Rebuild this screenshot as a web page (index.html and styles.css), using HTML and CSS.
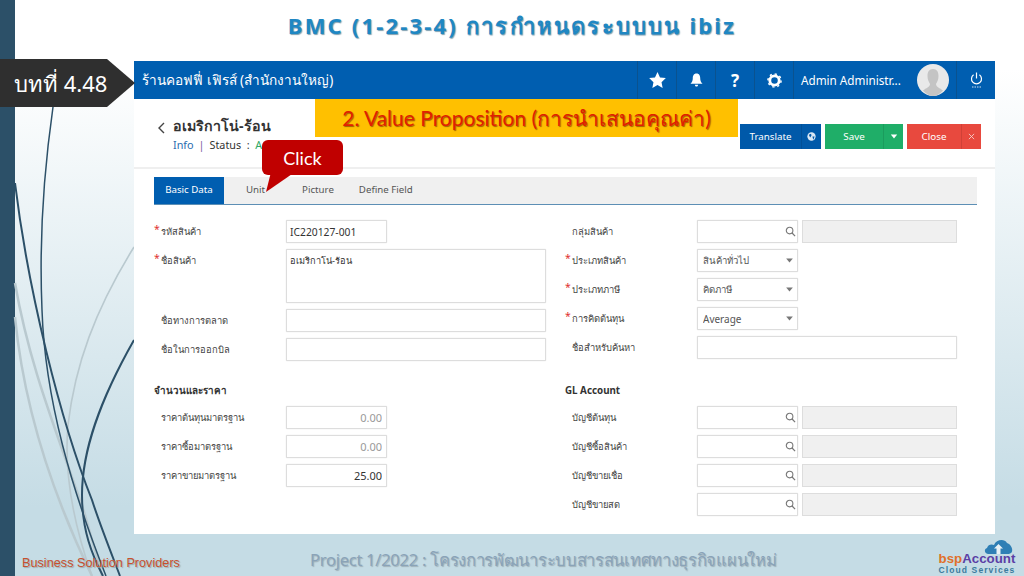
FILE: index.html
```html
<!DOCTYPE html>
<html lang="th">
<head>
    <meta charset="UTF-8"/>
    <title>BMC (1-2-3-4)</title>
    <link rel="stylesheet" href="styles.css">
</head>
<body>
<svg class="defs" width="0" height="0">
    <symbol id="i_search" viewBox="0 0 12 12"><circle cx="5" cy="5" r="3.6" fill="none" stroke="#777" stroke-width="1.2"/><path d="M7.7 7.7 L11 11" stroke="#777" stroke-width="1.4"/></symbol>
    <symbol id="i_caret" viewBox="0 0 10 6"><path d="M1 0.5 H9 L5 5.5 Z" fill="#777"/></symbol>
</svg>
<div class="slide">
    <!-- slide decoration -->
    <svg class="curves" width="1024" height="576" viewBox="0 0 1024 576">
        <g fill="none" stroke="#b9c9cf">
            <path d="M134 247 C95 310 75 365 68 425 C64 470 72 520 92 576" stroke-width="1.6"/>
            <path d="M15 283 C30 370 60 440 85 515 C92 540 98 560 102 576" stroke-width="2.5"/>
            <path d="M15 317 C25 420 60 510 92 576" stroke-width="2.5"/>
        </g>
        <g fill="none" stroke="#2c5068">
            <path d="M53 107 C44 170 39 240 42 310 C45 400 72 490 106 576" stroke-width="1.5"/>
            <path d="M15 183 C28 290 60 420 92 500 C100 525 112 555 120 576" stroke-width="2"/>
            <path d="M134 340 C100 400 82 450 82 495 C82 530 92 555 103 576" stroke-width="2"/>
        </g>
    </svg>

    <h1 class="slide_title">BMC (1-2-3-4) การกำหนดระบบบน ibiz</h1>

    <div class="app">
        <div class="topbar">
            <div class="company">ร้านคอฟฟี่ เฟิรส์ (สำนักงานใหญ่)</div>
            <div class="top_cell">
                <svg width="17" height="16" viewBox="0 0 24 23"><path d="M12 0 L15.6 7.8 L24 8.8 L17.8 14.6 L19.4 23 L12 18.8 L4.6 23 L6.2 14.6 L0 8.8 L8.4 7.8 Z" fill="#fff"/></svg>
            </div>
            <div class="top_cell">
                <svg width="13" height="14" viewBox="0 0 14 15"><path d="M7 0.5 C4 0.5 3 3 3 5.5 C3 8.5 2 10 0.5 11.5 H13.5 C12 10 11 8.5 11 5.5 C11 3 10 0.5 7 0.5 Z M5.2 12.6 H8.8 C8.6 14 7.8 14.6 7 14.6 C6.2 14.6 5.4 14 5.2 12.6 Z" fill="#fff"/></svg>
            </div>
            <div class="top_cell top_help">?</div>
            <div class="top_cell">
                <svg width="15" height="15" viewBox="0 0 16 16"><circle cx="8" cy="8" r="5" fill="none" stroke="#fff" stroke-width="3"/><circle cx="8" cy="8" r="7" fill="none" stroke="#fff" stroke-width="1.6" stroke-dasharray="2.4 3.1"/></svg>
            </div>
            <div class="top_user">
                <span class="user_name">Admin Administr...</span>
                <svg class="avatar" width="32" height="32" viewBox="0 0 32 32">
                    <circle cx="16" cy="16" r="16" fill="#e9e9e9"/>
                    <path d="M16 5 C12 5 10.5 8 10.5 12 C10.5 16 12 18 13 20 C13 23 9 24 6 26.5 C9 30 12.5 32 16 32 C19.5 32 23 30 26 26.5 C23 24 19 23 19 20 C20 18 21.5 16 21.5 12 C21.5 8 20 5 16 5 Z" fill="#c4c4c4"/>
                </svg>
            </div>
            <div class="top_cell">
                <svg width="13" height="16" viewBox="0 0 13 16"><path d="M3.6 2.8 A5 5 0 1 0 9.4 2.8" fill="none" stroke="#fff" stroke-width="1.2"/><path d="M6.5 0.5 V6.5" stroke="#fff" stroke-width="1.2"/><path d="M2 15 H11" stroke="#cfe0f0" stroke-width="1" stroke-dasharray="1.5 1"/></svg>
            </div>
        </div>

        <div class="page_head">
            <svg class="back" width="8" height="12" viewBox="0 0 8 12"><path d="M7 1 L2 6 L7 11" fill="none" stroke="#444" stroke-width="1.4"/></svg>
            <div class="head_text">
                <div class="item_name">อเมริกาโน่-ร้อน</div>
                <div class="item_info"><a class="info_link">Info</a><span class="info_sep">|</span>Status &nbsp;:&nbsp; <span class="status_val">Active</span></div>
            </div>
            <div class="actions">
                <div class="btn btn_blue"><span class="btn_text">Translate</span><span class="btn_side">
                    <svg width="9" height="9" viewBox="0 0 10 10"><circle cx="5" cy="5" r="4.6" fill="#dce8f4"/><path d="M2 3 L4.5 2 L5 4 L3.5 6 Z M6 5 L8.5 5 L7 8.5 Z" fill="#0059a9"/></svg>
                </span></div>
                <div class="btn btn_green"><span class="btn_text">Save</span><span class="btn_side">
                    <svg width="8" height="5" viewBox="0 0 10 6"><path d="M1 0.5 H9 L5 5.5 Z" fill="#fff"/></svg>
                </span></div>
                <div class="btn btn_red"><span class="btn_text">Close</span><span class="btn_side">
                    <svg width="7" height="7" viewBox="0 0 8 8"><path d="M1 1 L7 7 M7 1 L1 7" stroke="#f5d0cc" stroke-width="1"/></svg>
                </span></div>
            </div>
        </div>

        <div class="tabs">
            <div class="tab tab_active">Basic Data</div>
            <div class="tab tab_unit">Unit</div>
            <div class="tab tab_pic">Picture</div>
            <div class="tab">Define Field</div>
        </div>

        <div class="form">
            <div class="col">
                <div class="col_top">
                    <div class="row"><span class="star">*</span><label>รหัสสินค้า</label><input class="w_s" value="IC220127-001"></div>
                    <div class="row row_tall"><span class="star">*</span><label>ชื่อสินค้า</label><textarea class="w_l">อเมริกาโน่-ร้อน</textarea></div>
                    <div class="row"><span class="star"></span><label>ชื่อทางการตลาด</label><input class="w_l"></div>
                    <div class="row"><span class="star"></span><label>ชื่อในการออกบิล</label><input class="w_l"></div>
                </div>
                <div class="sec_head">จำนวนและราคา</div>
                <div class="row"><span class="star"></span><label>ราคาต้นทุนมาตรฐาน</label><input class="w_s num num_off" value="0.00"></div>
                <div class="row"><span class="star"></span><label>ราคาซื้อมาตรฐาน</label><input class="w_s num num_off" value="0.00"></div>
                <div class="row"><span class="star"></span><label>ราคาขายมาตรฐาน</label><input class="w_s num" value="25.00"></div>
            </div>

            <div class="col">
                <div class="col_top">
                    <div class="row"><span class="star"></span><label>กลุ่มสินค้า</label><div class="pick"><input class="w_s"><svg class="pick_icon" width="11" height="11"><use href="#i_search"/></svg></div><div class="ro"></div></div>
                    <div class="row"><span class="star">*</span><label>ประเภทสินค้า</label><div class="pick"><input class="w_s sel sel_th" value="สินค้าทั่วไป"><svg class="sel_icon" width="9" height="5"><use href="#i_caret"/></svg></div></div>
                    <div class="row"><span class="star">*</span><label>ประเภทภาษี</label><div class="pick"><input class="w_s sel sel_th" value="คิดภาษี"><svg class="sel_icon" width="9" height="5"><use href="#i_caret"/></svg></div></div>
                    <div class="row"><span class="star">*</span><label>การคิดต้นทุน</label><div class="pick"><input class="w_s sel" value="Average"><svg class="sel_icon" width="9" height="5"><use href="#i_caret"/></svg></div></div>
                    <div class="row"><span class="star"></span><label>ชื่อสำหรับค้นหา</label><input class="w_l"></div>
                </div>
                <div class="sec_head">GL Account</div>
                <div class="row"><span class="star"></span><label>บัญชีต้นทุน</label><div class="pick"><input class="w_s"><svg class="pick_icon" width="11" height="11"><use href="#i_search"/></svg></div><div class="ro"></div></div>
                <div class="row"><span class="star"></span><label>บัญชีซื้อสินค้า</label><div class="pick"><input class="w_s"><svg class="pick_icon" width="11" height="11"><use href="#i_search"/></svg></div><div class="ro"></div></div>
                <div class="row"><span class="star"></span><label>บัญชีขายเชื่อ</label><div class="pick"><input class="w_s"><svg class="pick_icon" width="11" height="11"><use href="#i_search"/></svg></div><div class="ro"></div></div>
                <div class="row"><span class="star"></span><label>บัญชีขายสด</label><div class="pick"><input class="w_s"><svg class="pick_icon" width="11" height="11"><use href="#i_search"/></svg></div><div class="ro"></div></div>
            </div>
        </div>
    </div>

    <div class="slide_foot">
        <div class="foot_left">Business Solution Providers</div>
        <div class="foot_mid">Project 1/2022 : โครงการพัฒนาระบบสารสนเทศทางธุรกิจแผนใหม่</div>
        <div class="logo">
            <svg class="logo_cloud" width="29" height="15" viewBox="0 0 29 15"><path d="M4 15 C0 14 0 10 3 9 C4 5 8 5 10 6 C12 1 20 -1 23 4 C27 5 30 11 27 14 L25 15 Z" fill="#2f7fb5"/><path d="M14.5 5 L19 9.5 H16.5 V15 H12.5 V9.5 H10 Z" fill="#e8f1f5"/></svg>
            <div class="logo_name"><span class="logo_bsp">bsp</span>Account</div>
            <div class="logo_sub">Cloud Services</div>
        </div>
    </div>

    <!-- callouts placed over the slide -->
    <div class="chapter">บทที่ 4.48</div>
    <div class="banner">2. Value Proposition (การนำเสนอคุณค่า)</div>
    <div class="click_note">Click</div>
    <svg class="click_tail" width="34" height="22" viewBox="0 0 34 22"><path d="M8 0 L32 0 L3 20 Z" fill="#c00000"/></svg>
</div>
</body>
</html>
```

FILE: styles.css
```css
* {
    box-sizing: border-box;
}

body {
    margin: 0;
    font-family: "Noto Sans", "Open Sans", sans-serif;
    color: #333;
}

.defs {
    position: absolute;
}

.slide {
    position: relative;
    width: 1024px;
    height: 576px;
    overflow: hidden;
    display: flex;
    flex-direction: column;
    padding-left: 15px;
    background:
        linear-gradient(#2c5068, #2c5068) left top / 15px 100% no-repeat,
        linear-gradient(180deg, #ffffff 0%, #ffffff 12%, #c5dce5 88%, #c5dce5 100%);
}

.curves {
    position: absolute;
    left: 0;
    top: 0;
}

.slide_title {
    position: relative;
    height: 61px;
    margin: 0 0 0 -15px;
    padding-top: 9px;
    text-align: center;
    font-size: 22px;
    line-height: 32px;
    font-weight: bold;
    letter-spacing: 2.2px;
    color: #1f87c3;
    text-shadow: 1px 1px 1px #7f9fb0;
}

.app {
    position: relative;
    width: 861px;
    height: 473px;
    margin-left: 119px;
    background: #fff;
    font-size: 10.5px;
}

/* top bar */
.topbar {
    display: flex;
    height: 38px;
    background: #005eb0;
    color: #fff;
}

.company {
    flex: 1;
    padding-left: 8px;
    font-size: 13.6px;
    line-height: 38px;
}

.top_cell {
    width: 39px;
    display: flex;
    align-items: center;
    justify-content: center;
    border-left: 1px solid #0a528f;
}

.top_help {
    font-size: 17px;
    font-weight: bold;
}

.top_user {
    width: 163px;
    display: flex;
    align-items: center;
    justify-content: space-between;
    padding: 0 7px;
    border-left: 1px solid #0a528f;
    font-size: 11.7px;
}

/* page header */
.page_head {
    display: flex;
    height: 70px;
    padding-left: 23px;
    border-bottom: 2px solid #efefef;
}

.back {
    margin-top: 23px;
}

.head_text {
    margin-left: 8px;
    padding-top: 17px;
}

.item_name {
    font-size: 14.2px;
    line-height: 20px;
    font-weight: bold;
    color: #333;
}

.item_info {
    font-size: 10.8px;
    line-height: 18px;
}

.info_link {
    color: #2a6db0;
}

.info_sep {
    margin: 0 5px;
    color: #7a5aa0;
}

.status_val {
    color: #2fa866;
}

.actions {
    display: flex;
    gap: 4px;
    margin-left: auto;
    margin-top: 25px;
    margin-right: 14px;
    height: 25px;
    font-size: 9.8px;
    color: #fff;
}

.btn {
    display: flex;
    line-height: 26px;
    text-align: center;
}

.btn_text {
    flex: 1;
}

.btn_side {
    width: 20px;
    display: flex;
    align-items: center;
    justify-content: center;
    border-left: 1px solid rgba(0, 0, 0, 0.1);
}

.btn_blue {
    width: 81px;
    background: #0059a9;
}

.btn_green {
    width: 78px;
    background: #1fae68;
}

.btn_red {
    width: 74px;
    background: #e8493e;
}

/* tabs */
.tabs {
    display: flex;
    height: 28px;
    margin: 8px 18px 0 20px;
    background: #f0f0f0;
    border-bottom: 1px solid #5d8fb5;
    font-size: 9.7px;
    line-height: 26px;
    color: #555;
}

.tab {
    padding: 0 11px;
}

.tab_active {
    width: 70px;
    padding: 0;
    margin-right: 11px;
    text-align: center;
    background: #005eb0;
    color: #fff;
}

.tab_unit {
    margin-right: 15px;
}

.tab_pic {
    margin-right: 3px;
}

/* form */
.form {
    display: flex;
    gap: 19px;
    padding: 15px 20px 0;
}

.col {
    width: 392px;
    display: flex;
    flex-direction: column;
    gap: 6px;
}

.col_top {
    height: 141px;
    display: flex;
    flex-direction: column;
    gap: 6px;
}

.row {
    display: flex;
    gap: 0;
    height: 23px;
    line-height: 23px;
}

.row_tall {
    height: 54px;
}

.star {
    width: 7px;
    line-height: 19px;
    color: #e03030;
}

label {
    width: 125px;
    font-size: 9.4px;
    line-height: 24px;
    color: #444;
}

.sec_head {
    height: 33px;
    padding-top: 17px;
    font-size: 9.8px;
    line-height: 14px;
    font-weight: bold;
    color: #333;
}

input,
textarea {
    height: 100%;
    padding: 0 4px 0 3px;
    border: 1px solid #ddd;
    border-radius: 1px;
    outline: none;
    resize: none;
    background: #fff;
    font-family: inherit;
    font-size: 10.3px;
    color: #333;
    box-shadow: 0 0 1px #ccc;
}

textarea {
    padding-top: 3px;
    font-size: 9.2px;
}

.w_s {
    width: 101px;
}

.w_l {
    width: 260px;
}

.num {
    text-align: right;
    font-size: 11px;
}

.num_off {
    color: #999;
}

.sel {
    padding-left: 5px;
    font-size: 10px;
    color: #555;
}

.sel_th {
    font-size: 9.6px;
}

.pick {
    position: relative;
    width: 101px;
    height: 23px;
}

.pick_icon {
    position: absolute;
    right: 2px;
    top: 6px;
}

.sel_icon {
    position: absolute;
    right: 4px;
    top: 9px;
}

.ro {
    width: 155px;
    margin-left: 4px;
    background: #f0f0f0;
    border: 1px solid #ddd;
}

/* slide footer */
.slide_foot {
    position: relative;
    display: grid;
    grid-template-columns: 288px 1fr auto;
    align-items: center;
    height: 42px;
    padding: 0 8px 0 7px;
}

.foot_left {
    padding-top: 15px;
    font-family: "Liberation Sans", sans-serif;
    font-size: 12.7px;
    color: #c8502e;
    text-shadow: 1px 1px 1px #9aa;
}

.foot_mid {
    padding-top: 10px;
    font-size: 16.6px;
    letter-spacing: -0.3px;
    white-space: nowrap;
    color: #8aa3b8;
    text-shadow: 1px 1px 1px #9fb0b8;
}

.logo {
    position: relative;
    width: 78px;
    padding-top: 19px;
    font-family: "Liberation Sans", sans-serif;
    text-align: center;
}

.logo_cloud {
    position: absolute;
    top: 5px;
    right: 3px;
}

.logo_name {
    font-size: 13.3px;
    line-height: 12px;
    font-weight: bold;
    color: #5b3fa5;
}

.logo_bsp {
    color: #e0702a;
}

.logo_sub {
    font-size: 8.5px;
    line-height: 11px;
    font-weight: bold;
    letter-spacing: 1.1px;
    color: #3a7b9e;
    white-space: nowrap;
}

/* overlays */
.chapter {
    position: absolute;
    left: 0;
    top: 59px;
    width: 135px;
    height: 48px;
    padding-left: 14px;
    line-height: 48px;
    font-size: 22px;
    color: #fff;
    background: #2f2f2f;
    clip-path: polygon(0 0, 107px 0, 135px 24px, 107px 48px, 0 48px);
}

.banner {
    position: absolute;
    left: 315px;
    top: 99px;
    width: 423px;
    height: 38px;
    line-height: 37px;
    text-align: center;
    font-family: "Lato", sans-serif;
    font-size: 21px;
    color: #e02000;
    background: #ffc000;
    text-shadow: 1px 1px 1px #a06000;
}

.click_note {
    position: absolute;
    left: 262px;
    top: 140px;
    width: 81px;
    height: 35px;
    border-radius: 6px;
    line-height: 36px;
    text-align: center;
    font-family: "Lato", sans-serif;
    font-size: 18px;
    color: #fff;
    background: #c00000;
}

.click_tail {
    position: absolute;
    left: 263px;
    top: 172px;
}
```
